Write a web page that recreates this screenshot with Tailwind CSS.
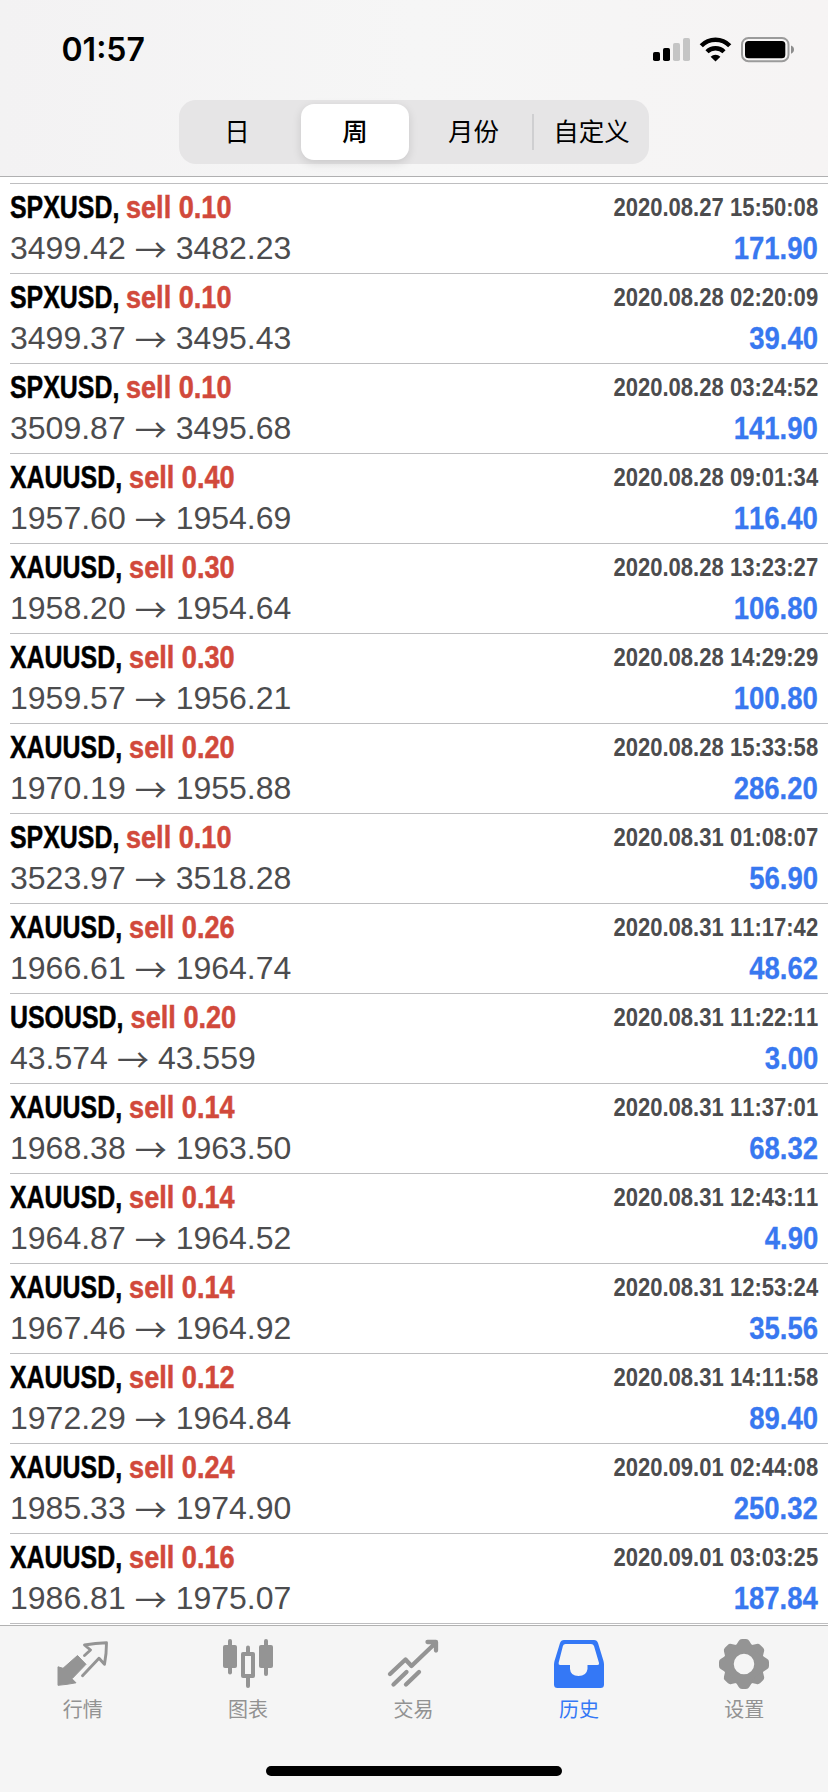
<!DOCTYPE html>
<html lang="zh-CN">
<head>
<meta charset="utf-8">
<meta name="viewport" content="width=828">
<title>历史</title>
<script src="https://cdn.jsdelivr.net/npm/@tailwindcss/browser@4"></script>
</head>
<body class="bg-white">
<div class="flex h-[1792px] w-[828px] flex-col overflow-hidden bg-white font-['Liberation_Sans','Noto_Sans_CJK_SC',sans-serif]">

  <header class="flex h-[177px] shrink-0 flex-col border-b border-[#b0b0b1] bg-[#f5f5f5] bg-linear-to-r from-[#f3f2f3] via-[#f6f6f6] to-[#f6f4f4]">
    <div class="flex h-[100px] items-start justify-between pt-[30px] pr-[34px] pl-[61.5px]">
      <div id="clock" class="h-10 font-['Inter',sans-serif] text-[32px] leading-10 font-semibold whitespace-nowrap text-black">01:57</div>
      <svg class="mt-[6px] h-[28px] w-[142px]" viewBox="652 36 142 28">
        <g fill="#000"><rect x="653" y="52" width="7" height="9" rx="1.8"/><rect x="663" y="48" width="7" height="13" rx="1.8"/></g>
        <g fill="#c5c5c5"><rect x="673" y="43" width="7" height="18" rx="1.8"/><rect x="683" y="38" width="7" height="23" rx="1.8"/></g>
        <g fill="none" stroke="#000" stroke-width="4.4"><path d="M701.3 45.8a19.6 19.6 0 0 1 28.4 0"/><path d="M707 51.8a12 12 0 0 1 17 0"/></g>
        <path d="M710.6 56.8a7 7 0 0 1 9.800 0L715.5 61.4Z"/>
        <rect x="742" y="38" width="46.500" height="23.200" rx="6.5" fill="none" stroke="#9b9b9b" stroke-width="2"/>
        <rect x="745" y="41" width="40.300" height="17.200" rx="3.5"/>
        <path fill="#8d8d8d" d="M791 45.500q3 1 3 4.100t-3 4.100Z"/>
      </svg>
    </div>
    <div class="mx-auto flex h-16 w-[470px] shrink-0 items-center rounded-[17px] bg-[#e6e5e6] text-[25.5px] font-normal text-black">
      <div class="flex h-full w-[116px] items-center justify-center pt-px">日</div>
      <div class="ml-[6px] flex h-14 w-[108px] items-center justify-center rounded-[13px] bg-white pt-px font-medium shadow-[0_3px_10px_rgba(0,0,0,0.13)]">周</div>
      <div class="flex h-full w-[123px] items-center justify-center pt-px pl-[6px]">月份</div>
      <div class="h-9 w-[2px] bg-[#cfcfd1]"></div>
      <div class="flex h-full flex-1 items-center justify-center pt-px">自定义</div>
    </div>
  </header>

  <main id="deals" class="mt-[6px] h-[1441px] shrink-0"></main>

  <div class="h-px shrink-0"></div>
  <nav class="flex h-[167px] shrink-0 flex-col items-center border-t border-[#b2b2b2] bg-[#f5f5f5]">
    <div class="grid w-[827px] grid-cols-5 self-start text-[20px] leading-[30px] text-[#929292]">
      <div class="flex flex-col items-center">
        <svg class="mt-[11px] h-[54px] w-[54px]" viewBox="55.500 1637 54 54"><path fill="#949494" stroke="#949494" stroke-width="1" stroke-linejoin="round" d="M77 1655.500l8.500 8.800-14 14.500 4 4q-9 1.800-18 2.500v-18.500l5 1.500Z"/><path fill="none" stroke="#949494" stroke-width="2.900" stroke-linejoin="round" stroke-linecap="round" d="M84 1655.500l6-5.500-6-5q11-2 22-2.200 0 11-2 21.500l-5.500-6.100-16.500 17.500"/></svg>
        <div class="mt-1">行情</div>
      </div>
      <div class="flex flex-col items-center">
        <svg class="mt-[11px] h-[54px] w-[54px]" viewBox="221 1637 54 54"><g fill="#949494"><rect x="223" y="1645" width="14" height="23" rx="2"/><rect x="228" y="1639" width="4" height="35.500" rx="2"/><rect x="259" y="1645" width="14" height="23" rx="2"/><rect x="264" y="1639" width="4" height="37" rx="2"/><rect x="246" y="1645.500" width="4" height="9" rx="2"/><rect x="246" y="1676" width="4" height="12" rx="2"/></g><rect x="243" y="1654" width="10" height="22" fill="none" stroke="#949494" stroke-width="4" stroke-linejoin="round"/></svg>
        <div class="mt-1">图表</div>
      </div>
      <div class="flex flex-col items-center">
        <svg class="mt-[11px] h-[54px] w-[54px]" viewBox="386 1637 54 54"><g fill="none" stroke="#949494" stroke-width="4.300" stroke-linecap="round" stroke-linejoin="round"><path d="M390 1674l15.500-14.500 6 6.500 24-23M427.500 1642h8.500v8.500"/><path d="M393.500 1684.500l13-12.500M406 1684.500l13-12.500"/></g></svg>
        <div class="mt-1">交易</div>
      </div>
      <div class="flex flex-col items-center text-[#3478f6]">
        <svg class="mt-[11px] h-[54px] w-[54px]" viewBox="551 1637 54 54"><path fill="#3478f6" fill-rule="evenodd" d="M563 1640h30q3 0 4 3l5.500 18q.5 2 .5 4v19.500q0 3.500-3.500 3.500h-43q-3.500 0-3.500-3.500V1665q0-2 .5-4l5.500-18q1-3 4-3ZM564.500 1644q-2 0-2.600 2l-4.300 17q-.3 2 1.500 2h9.900v4q.5 7 8.500 7t9-7v-4h10q2 0 1.500-2l-5-17q-.7-2-3-2Z"/></svg>
        <div class="mt-1">历史</div>
      </div>
      <div class="flex flex-col items-center">
        <svg class="mt-[11px] h-[54px] w-[54px]" viewBox="-27 -27 54 54"><g fill="#949494"><circle r="15.500" fill="none" stroke="#949494" stroke-width="10.500"/><g id="teeth"><path id="tooth" d="M-9-17L-5.300-23q1.100-2 3.300-2H2q2.200 0 3.300 2L9-17Z"/></g></g></svg>
        <div class="mt-1">设置</div>
      </div>
    </div>
    <div class="mt-[41px] h-[10px] w-[296px] rounded-full bg-black"></div>
  </nav>
</div>

<script>
const teeth = document.getElementById('teeth');
const tooth = document.getElementById('tooth');
for (let a = 45; a < 360; a += 45) {
  const t = tooth.cloneNode();
  t.removeAttribute('id');
  t.setAttribute('transform', `rotate(${a})`);
  teeth.append(t);
}

const deals = [
  ['SPXUSD', '0.10', '3499.42', '3482.23', '2020.08.27 15:50:08', '171.90'],
  ['SPXUSD', '0.10', '3499.37', '3495.43', '2020.08.28 02:20:09', '39.40'],
  ['SPXUSD', '0.10', '3509.87', '3495.68', '2020.08.28 03:24:52', '141.90'],
  ['XAUUSD', '0.40', '1957.60', '1954.69', '2020.08.28 09:01:34', '116.40'],
  ['XAUUSD', '0.30', '1958.20', '1954.64', '2020.08.28 13:23:27', '106.80'],
  ['XAUUSD', '0.30', '1959.57', '1956.21', '2020.08.28 14:29:29', '100.80'],
  ['XAUUSD', '0.20', '1970.19', '1955.88', '2020.08.28 15:33:58', '286.20'],
  ['SPXUSD', '0.10', '3523.97', '3518.28', '2020.08.31 01:08:07', '56.90'],
  ['XAUUSD', '0.26', '1966.61', '1964.74', '2020.08.31 11:17:42', '48.62'],
  ['USOUSD', '0.20', '43.574', '43.559', '2020.08.31 11:22:11', '3.00'],
  ['XAUUSD', '0.14', '1968.38', '1963.50', '2020.08.31 11:37:01', '68.32'],
  ['XAUUSD', '0.14', '1964.87', '1964.52', '2020.08.31 12:43:11', '4.90'],
  ['XAUUSD', '0.14', '1967.46', '1964.92', '2020.08.31 12:53:24', '35.56'],
  ['XAUUSD', '0.12', '1972.29', '1964.84', '2020.08.31 14:11:58', '89.40'],
  ['XAUUSD', '0.24', '1985.33', '1974.90', '2020.09.01 02:44:08', '250.32'],
  ['XAUUSD', '0.16', '1986.81', '1975.07', '2020.09.01 03:03:25', '187.84'],
];
document.getElementById('deals').innerHTML = deals.map(([symbol, volume, open, close, time, profit]) => `
  <div class="ml-[10px] flex h-[90px] justify-between border-t border-[#bebec0] pr-[10px] whitespace-nowrap [font-kerning:none] last:h-[91px] last:border-b">
    <div class="flex flex-col pt-[3px]">
      <div class="flex h-10 origin-left scale-x-[0.778] text-[32px] leading-10 font-bold text-black [-webkit-text-stroke:0.5px]"><span>${symbol},</span><span class="ml-[9px] origin-left scale-x-[1.09] text-[#d1493b]">sell ${volume}</span></div>
      <div class="mt-px flex h-10 items-center text-[32px] leading-10 text-[#4c4c4e]"><span>${open}</span><span class="mx-[9px] w-8 text-center font-['Noto_Sans_CJK_SC',sans-serif] font-normal">→</span><span>${close}</span></div>
    </div>
    <div class="flex flex-col items-end pt-[3px] font-bold">
      <div class="h-10 origin-right scale-x-[0.882] text-[25px] leading-10 text-[#4c4c4e]">${time}</div>
      <div class="mt-px h-10 origin-right scale-x-[0.86] text-[32px] leading-10 text-[#3878f0] [-webkit-text-stroke:0.3px]">${profit}</div>
    </div>
  </div>`).join('');
</script>
</body>
</html>
